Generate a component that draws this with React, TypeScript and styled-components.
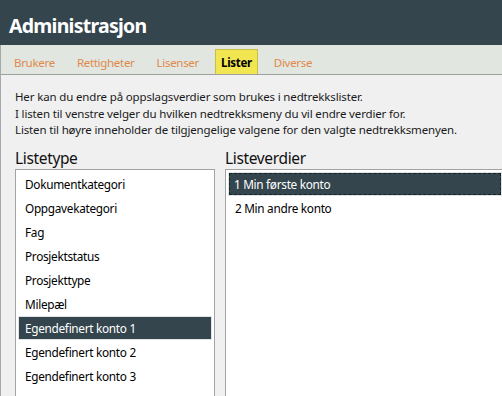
import React from "react";
import styled, { createGlobalStyle } from "styled-components";

const Global = createGlobalStyle`
  html, body { margin: 0; padding: 0; background: #f0f0f0; overflow: hidden; }
  #root { width: 502px; height: 396px; }
`;

const Window = styled.div`
  width: 502px;
  height: 396px;
  display: flex;
  flex-direction: column;
  overflow: hidden;
  background: #f0f0f0;
  font-family: "Noto Sans", "Open Sans", sans-serif;
  font-size: 11.5px;
  letter-spacing: -0.15px;
  color: #000;
`;

const Header = styled.header`
  height: 45px;
  flex: none;
  background: #34454d;
  display: flex;
  align-items: center;
  padding: 5px 0 0 9px;
  box-sizing: border-box;
`;

const Title = styled.h1`
  margin: 0;
  font-size: 19.5px;
  font-weight: 700;
  color: #ffffff;
  letter-spacing: -0.75px;
`;

const Body = styled.div`
  flex: 1;
  display: flex;
  flex-direction: column;
  border-left: 1px solid #a5a9ab;
  min-height: 0;
`;

const TabBar = styled.nav`
  height: 30px;
  flex: none;
  box-sizing: border-box;
  background: #e1e6e1;
  border-bottom: 1px solid #a0a0a0;
  display: flex;
  align-items: flex-end;
  gap: 10px;
  padding-left: 7px;
`;

const Tab = styled.div<{ $active?: boolean }>`
  height: 25px;
  box-sizing: border-box;
  padding: 0 5px;
  display: flex;
  align-items: center;
  border: 1px solid ${(p) => (p.$active ? "#c9c043" : "transparent")};
  border-bottom: none;
  background: ${(p) => (p.$active ? "#f1e651" : "transparent")};
  color: ${(p) => (p.$active ? "#000" : "#e0894a")};
  font-weight: ${(p) => (p.$active ? 700 : 400)};
  font-size: 11.5px;
  letter-spacing: -0.3px;
`;

const Content = styled.main`
  flex: 1;
  display: flex;
  flex-direction: column;
  padding: 14px 0 0 14px;
  min-height: 0;
`;

const Intro = styled.p`
  margin: 0;
  line-height: 16.5px;
  color: #1a1a1a;
`;

const Columns = styled.div`
  display: grid;
  grid-template-columns: 200px 280px;
  column-gap: 10px;
  margin-top: 8px;
  flex: 1;
  min-height: 0;
`;

const Column = styled.section`
  display: flex;
  flex-direction: column;
  min-height: 0;
`;

const Heading = styled.h2`
  margin: 0;
  height: 22px;
  line-height: 22px;
  font-size: 15.5px;
  font-weight: 400;
  letter-spacing: -0.35px;
  color: #111;
`;

const ListBox = styled.ul`
  list-style: none;
  margin: 0;
  padding: 2px;
  flex: 1;
  background: #ffffff;
  border: 1px solid #a3a3a3;
  border-bottom: none;
`;

const Item = styled.li<{ $selected?: boolean; $focused?: boolean }>`
  position: relative;
  height: 24px;
  box-sizing: border-box;
  display: flex;
  align-items: center;
  padding: 1px 0 0 ${(p) => (p.$focused ? "5px" : "6px")};
  border: 1px solid ${(p) => (p.$selected ? "#dfe5e7" : "transparent")};
  background: ${(p) => (p.$selected ? "#34454d" : "transparent")};
  color: ${(p) => (p.$selected ? "#ffffff" : "#000000")};
  font-size: 11.8px;
  letter-spacing: -0.3px;
  white-space: nowrap;
  ${(p) =>
    p.$focused
      ? `&::after {
          content: "";
          position: absolute;
          inset: 0;
          border: 1px dashed #15222a;
        }`
      : ""}
`;

const types = [
  "Dokumentkategori",
  "Oppgavekategori",
  "Fag",
  "Prosjektstatus",
  "Prosjekttype",
  "Milepæl",
  "Egendefinert konto 1",
  "Egendefinert konto 2",
  "Egendefinert konto 3",
];

const values = ["1 Min første konto", "2 Min andre konto"];

export default function App() {
  return (
    <>
      <Global />
      <Window>
        <Header>
          <Title>Administrasjon</Title>
        </Header>
        <Body>
          <TabBar>
            <Tab>Brukere</Tab>
            <Tab>Rettigheter</Tab>
            <Tab>Lisenser</Tab>
            <Tab $active>Lister</Tab>
            <Tab>Diverse</Tab>
          </TabBar>
          <Content>
            <Intro>
              Her kan du endre på oppslagsverdier som brukes i nedtrekkslister.
              <br />I listen til venstre velger du hvilken nedtrekksmeny du vil endre verdier for.
              <br />Listen til høyre inneholder de tilgjengelige valgene for den valgte nedtrekksmenyen.
            </Intro>
            <Columns>
              <Column>
                <Heading>Listetype</Heading>
                <ListBox>
                  {types.map((t, i) => (
                    <Item key={t} $selected={i === 6}>
                      {t}
                    </Item>
                  ))}
                </ListBox>
              </Column>
              <Column>
                <Heading>Listeverdier</Heading>
                <ListBox>
                  {values.map((v, i) => (
                    <Item key={v} $selected={i === 0} $focused={i === 0}>
                      {v}
                    </Item>
                  ))}
                </ListBox>
              </Column>
            </Columns>
          </Content>
        </Body>
      </Window>
    </>
  );
}
